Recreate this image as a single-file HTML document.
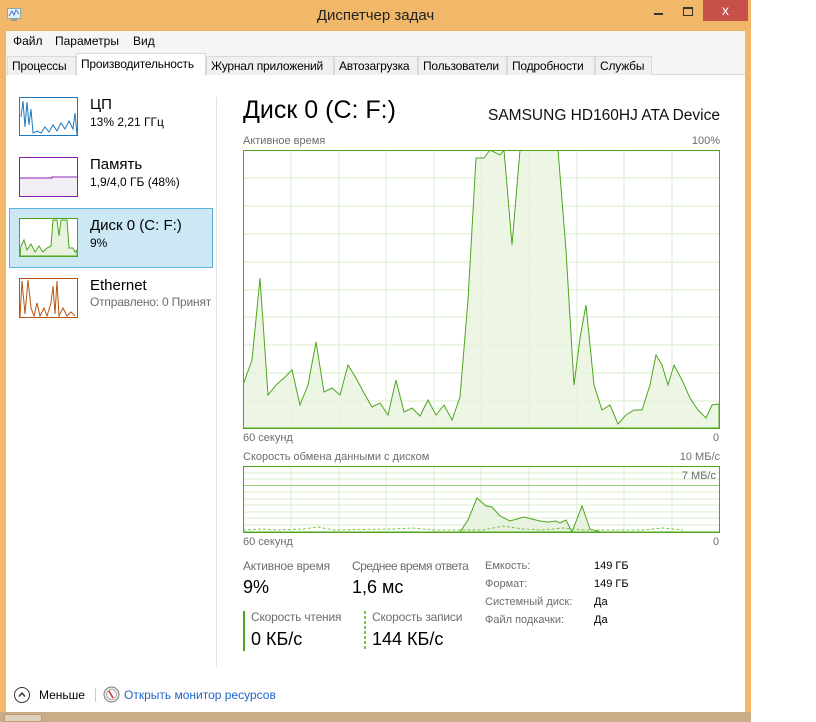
<!DOCTYPE html>
<html><head><meta charset="utf-8"><style>
*{margin:0;padding:0;box-sizing:border-box}
body{width:816px;height:722px;background:#fff;position:relative;overflow:hidden;font-family:"Liberation Sans","DejaVu Sans",sans-serif;color:#000}
.a{position:absolute;white-space:nowrap}
#win{position:absolute;left:0;top:0;width:751px;height:722px;background:#f0b868}
#title{left:0;top:7px;width:751px;text-align:center;font-size:15px;color:#222}
#client{position:absolute;left:6px;top:31px;width:739px;height:681px;background:#fff}
#menu{position:absolute;left:6px;top:31px;width:739px;height:22px;background:#f5f5f5}
#tabbar{position:absolute;left:6px;top:53px;width:739px;height:22px;background:#f5f5f5;border-bottom:1px solid #d9d9d9}
.tab{position:absolute;top:56px;height:19px;border:1px solid #d9d9d9;border-bottom:none;background:#f0f0f0;font-size:12px;padding:2px 4px 0 4px;color:#000;letter-spacing:-0.2px}
.g{font-size:11px;color:#6d6d6d}
.s{font-size:12px;color:#6d6d6d;letter-spacing:-0.2px}
</style></head><body>
<div id="win"></div>
<div class="a" id="title">Диспетчер задач</div>
<svg class="a" style="left:7px;top:8px" width="16" height="14"><rect x="0.5" y="0.5" width="13" height="10" fill="#e8eef5" stroke="#8aa"/><polyline points="2,8 5,3 7,7 9,2 12,6" fill="none" stroke="#3a7fc0"/><rect x="4" y="11" width="6" height="2" fill="#999"/></svg>
<div class="a" style="left:654px;top:13px;width:9px;height:2px;background:#333"></div>
<div class="a" style="left:683px;top:7px;width:10px;height:9px;border:1px solid #333;border-top-width:2px"></div>
<div class="a" style="left:703px;top:0;width:45px;height:21px;background:#c7504b;color:#fff;font-size:14px;text-align:center;line-height:21px">x</div>
<div id="client"></div>
<div id="menu"></div>
<div class="a" style="left:13px;top:34px;font-size:12px">Файл</div>
<div class="a" style="left:55px;top:34px;font-size:12px">Параметры</div>
<div class="a" style="left:133px;top:34px;font-size:12px">Вид</div>
<div id="tabbar"></div>
<div class="tab" style="left:7px;width:69px">Процессы</div>
<div class="tab" style="left:76px;top:53px;height:23px;width:130px;background:#fff;padding-top:3px">Производительность</div>
<div class="tab" style="left:206px;width:128px">Журнал приложений</div>
<div class="tab" style="left:334px;width:84px">Автозагрузка</div>
<div class="tab" style="left:418px;width:89px">Пользователи</div>
<div class="tab" style="left:507px;width:88px">Подробности</div>
<div class="tab" style="left:595px;width:57px">Службы</div>

<div class="a" style="left:216px;top:97px;width:1px;height:570px;background:#e2e2e2"></div>
<svg class="a" style="left:19px;top:97px" width="60" height="40"><rect x="0.5" y="0.5" width="58" height="38" fill="#fff" stroke="#1a7ac3"/><polyline points="2,20 4,4 6,30 8,5 10,28 12,12 14,36 18,34 22,36 26,30 30,35 34,28 38,34 42,26 46,32 50,24 54,32 56,16 58,38" fill="none" stroke="#1a7ac3" stroke-width="1"/></svg>
<div class="a" style="left:90px;top:96px;font-size:15px">ЦП</div>
<div class="a" style="left:90px;top:115px;font-size:12px">13% 2,21 ГГц</div>
<svg class="a" style="left:19px;top:157px" width="60" height="41"><rect x="0.5" y="0.5" width="58" height="39" fill="#fff" stroke="#8c1db0"/><rect x="1" y="21" width="57" height="18" fill="#f1eef4"/><polyline points="1,21 33,21 33,20 58,20" fill="none" stroke="#8c1db0"/></svg>
<div class="a" style="left:90px;top:156px;font-size:15px">Память</div>
<div class="a" style="left:90px;top:175px;font-size:12px">1,9/4,0 ГБ (48%)</div>
<div class="a" style="left:9px;top:208px;width:204px;height:60px;background:#cce8f5;border:1px solid #5db3e0"></div>
<svg class="a" style="left:19px;top:218px" width="60" height="40"><rect x="0.5" y="0.5" width="58" height="38" fill="#fff" stroke="#4da61e"/><polygon points="1,38 2,28 5,22 8,32 12,26 16,34 20,28 24,34 28,30 32,28 34,2 38,2 40,18 42,2 48,2 50,30 54,30 56,34 58,32 58,38" fill="#e8f3df" stroke="#4da61e" stroke-width="1"/></svg>
<div class="a" style="left:90px;top:217px;font-size:15px">Диск 0 (C: F:)</div>
<div class="a" style="left:90px;top:236px;font-size:12px">9%</div>
<svg class="a" style="left:19px;top:278px" width="60" height="41"><rect x="0.5" y="0.5" width="58" height="39" fill="#fff" stroke="#b85410"/><polyline points="1,39 3,3 6,36 9,2 12,30 15,38 18,25 21,38 25,30 28,38 32,25 34,8 36,36 38,3 40,38 44,30 48,38 52,34 56,38" fill="none" stroke="#b85410"/></svg>
<div class="a" style="left:90px;top:277px;font-size:15px">Ethernet</div>
<div class="a s" style="left:90px;top:295px;width:126px;overflow:hidden">Отправлено: 0 Принят</div>

<div class="a" style="left:243px;top:96px;font-size:25px">Диск 0 (C: F:)</div>
<div class="a" style="left:420px;width:300px;text-align:right;top:107px;font-size:15.5px;color:#111">SAMSUNG HD160HJ ATA Device</div>
<div class="a g" style="left:243px;top:135px">Активное время</div>
<div class="a g" style="left:620px;width:100px;text-align:right;top:135px">100%</div>
<svg class="a" style="left:243px;top:150px" width="477" height="279">
<g stroke="#d9ecc9" stroke-width="1">
<path d="M48 0V279M96 0V279M143 0V279M191 0V279M238 0V279M286 0V279M334 0V279M381 0V279M429 0V279M0 28H477M0 56H477M0 84H477M0 112H477M0 140H477M0 167H477M0 195H477M0 223H477M0 251H477"/></g>
<polygon fill="#e8f3df" fill-opacity="0.8" stroke="#4da61e" stroke-width="1" points="0,278 0,235 9,210 17,128 25,245 33,235 41,228 49,220 57,255 65,235 73,192 81,242 89,238 97,245 105,215 113,228 121,243 129,257 137,253 145,265 153,230 161,262 169,258 177,266 185,250 193,265 201,255 209,270 217,247 225,150 233,8 241,8 247,0 257,5 261,0 269,95 277,0 285,0 307,0 315,0 323,100 331,235 337,188 343,155 351,235 359,260 367,255 375,274 383,265 391,260 399,260 407,235 413,205 419,215 425,235 431,215 439,230 447,248 455,260 463,268 469,255 476,254 476,278"/>
<rect x="0.5" y="0.5" width="476" height="278" fill="none" stroke="#4da61e"/>
</svg>
<div class="a g" style="left:243px;top:432px">60 секунд</div>
<div class="a g" style="left:713px;top:432px">0</div>
<div class="a g" style="left:243px;top:451px">Скорость обмена данными с диском</div>
<div class="a g" style="left:620px;width:100px;text-align:right;top:451px">10 МБ/с</div>
<svg class="a" style="left:243px;top:466px" width="477" height="67">
<g stroke="#d9ecc9"><path d="M48 0V67M96 0V67M143 0V67M191 0V67M238 0V67M286 0V67M334 0V67M381 0V67M429 0V67M0 7H477M0 13H477M0 26H477M0 33H477M0 39H477M0 46H477M0 52H477M0 59H477"/></g>
<path d="M0 19.5H477" stroke="#9bd07a"/>
<polygon points="0,66 217,66 225,54 234,32 243,40 249,41 257,50 267,55 281,51 289,53 297,55 305,56 313,55 317,57 323,54 329,66 339,40 347,63 357,66 477,66" fill="#e8f3df" stroke="#4da61e"/>
<polyline points="0,64 20,63 35,64 60,63 75,61 90,64 150,63 170,62 190,64 240,64 260,60 280,63 300,64 320,62 340,64 400,64 420,62 440,64" fill="none" stroke="#7cc34f" stroke-dasharray="3,2"/>
<rect x="0.5" y="0.5" width="476" height="66" fill="none" stroke="#4da61e"/>
</svg>
<div class="a g" style="left:616px;width:100px;text-align:right;top:470px">7 МБ/с</div>
<div class="a g" style="left:243px;top:536px">60 секунд</div>
<div class="a g" style="left:713px;top:536px">0</div>

<div class="a s" style="left:243px;top:559px">Активное время</div>
<div class="a" style="left:243px;top:577px;font-size:18px">9%</div>
<div class="a s" style="left:352px;top:559px;letter-spacing:-0.5px">Среднее время ответа</div>
<div class="a" style="left:352px;top:577px;font-size:18px">1,6 мс</div>
<div class="a" style="left:243px;top:611px;width:2px;height:40px;background:#4da61e"></div>
<div class="a s" style="left:251px;top:610px">Скорость чтения</div>
<div class="a" style="left:251px;top:629px;font-size:18px">0 КБ/с</div>
<div class="a" style="left:364px;top:611px;width:2px;height:40px;background:repeating-linear-gradient(#7cc34f 0 3px,transparent 3px 5px)"></div>
<div class="a s" style="left:372px;top:610px">Скорость записи</div>
<div class="a" style="left:372px;top:629px;font-size:18px">144 КБ/с</div>
<div class="a g" style="left:485px;top:560px">Емкость:</div>
<div class="a" style="left:594px;top:560px;font-size:11px">149 ГБ</div>
<div class="a g" style="left:485px;top:578px">Формат:</div>
<div class="a" style="left:594px;top:578px;font-size:11px">149 ГБ</div>
<div class="a g" style="left:485px;top:596px">Системный диск:</div>
<div class="a" style="left:594px;top:596px;font-size:11px">Да</div>
<div class="a g" style="left:485px;top:614px">Файл подкачки:</div>
<div class="a" style="left:594px;top:614px;font-size:11px">Да</div>

<svg class="a" style="left:13px;top:686px" width="18" height="18"><circle cx="9" cy="9" r="7.5" fill="#fff" stroke="#333"/><polyline points="6,10.5 9,7 12,10.5" fill="none" stroke="#333" stroke-width="1.5"/></svg>
<div class="a" style="left:39px;top:688px;font-size:12px">Меньше</div>
<div class="a" style="left:95px;top:688px;width:1px;height:14px;background:#ccc"></div>
<svg class="a" style="left:103px;top:686px" width="17" height="17"><circle cx="8.5" cy="8.5" r="7.5" fill="#eee" stroke="#777"/><circle cx="8.5" cy="8.5" r="5" fill="#fff" stroke="#aaa"/><line x1="6" y1="5" x2="10" y2="12" stroke="#c33" stroke-width="1.5"/></svg>
<div class="a" style="left:124px;top:688px;font-size:12px;color:#1e64c8">Открыть монитор ресурсов</div>
<div class="a" style="left:0;top:712px;width:751px;height:10px;background:#c9ad86"></div>
<div class="a" style="left:4px;top:714px;width:38px;height:8px;background:#ddd0bd;border:1px solid #b89d75"></div>
</body></html>
